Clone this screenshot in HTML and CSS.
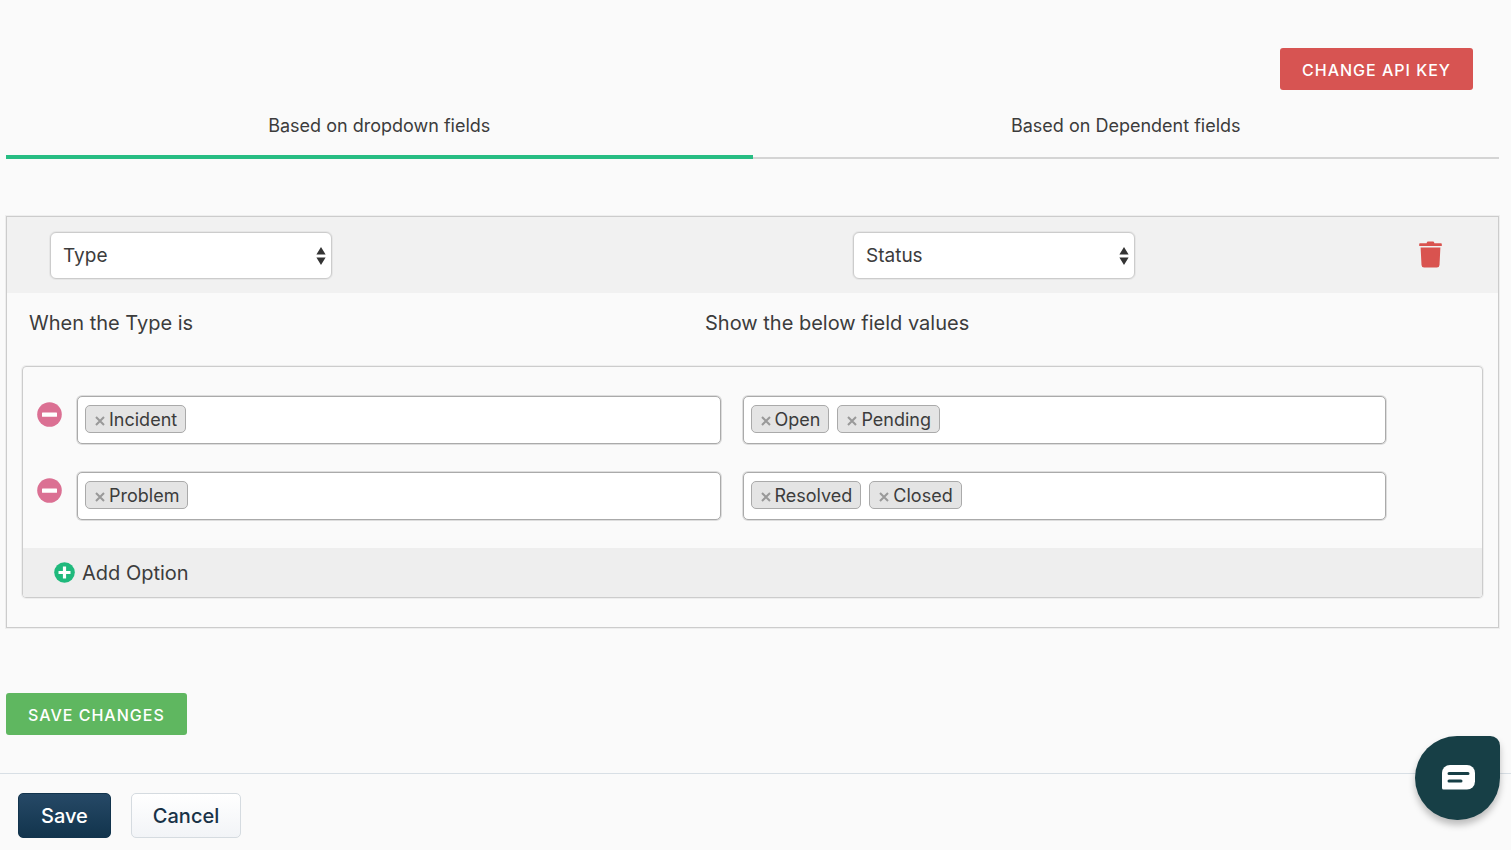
FILE: index.html
```html
<!DOCTYPE html>
<html lang="en">
<head>
<meta charset="utf-8">
<title>Field mapping settings</title>
<link rel="stylesheet" href="styles.css">
</head>
<body>
<svg class="sprite" aria-hidden="true">
  <symbol id="minus" viewBox="0 0 25 25"><circle cx="12.5" cy="12.5" r="12.3" fill="#db7093"/><rect x="5" y="10.4" width="15" height="4.4" rx=".6" fill="#fff"/></symbol>
  <symbol id="plus" viewBox="0 0 21 21"><circle cx="10.5" cy="10.5" r="10.3" fill="#1fb97c"/><path d="M8.900 4.500h3.200v4.400h4.400v3.200h-4.400v4.400H8.900v-4.400H4.500V8.900h4.400z" fill="#fff"/></symbol>
  <symbol id="arrows" viewBox="0 0 10 18"><path d="M5 0l4.6 7.5H.4zM5 18l4.6-7.5H.4z" fill="#333"/></symbol>
  <symbol id="cross" viewBox="0 0 10 10"><path d="M1 1l8 8M9 1L1 9" stroke="#999" stroke-width="2" fill="none"/></symbol>
</svg>
<main class="content">
  <div class="toolbar"><button class="btn btn-danger" type="button">CHANGE API KEY</button></div>
  <div class="tabs" role="tablist">
    <button class="tab tab-active" role="tab" aria-selected="true" type="button">Based on dropdown fields</button>
    <button class="tab" role="tab" aria-selected="false" type="button">Based on Dependent fields</button>
  </div>
  <section class="rule">
    <div class="rule-head">
      <div class="select-wrap"><select class="select" aria-label="Source field"><option>Type</option></select><svg class="select-arrows"><use href="#arrows"/></svg></div>
      <div class="select-wrap"><select class="select" aria-label="Target field"><option>Status</option></select><svg class="select-arrows"><use href="#arrows"/></svg></div>
      <button class="icon-btn trash-btn" type="button" aria-label="Delete rule">
        <svg class="trash" viewBox="0 0 23 27"><path d="M1 2.2h6.6C7.8.8 8.6.4 9.5.4h4c.9 0 1.700.4 1.900 1.800H22q.8 0 .8.8v1.900H.2V3q0-.8.8-.8zM1.600 6.500h19.800l-.9 17.500q-.2 2.500-2.600 2.500H5.100q-2.400 0-2.600-2.500z" fill="#d9534f"/></svg>
      </button>
    </div>
    <div class="rule-labels"><span>When the Type is</span><span>Show the below field values</span></div>
    <div class="options">
      <div class="option-list">
        <div class="option">
          <button class="icon-btn remove" type="button" aria-label="Remove option"><svg class="minus"><use href="#minus"/></svg></button>
          <div class="tags">
            <span class="tag"><button class="icon-btn" type="button" aria-label="Remove Incident"><svg class="cross"><use href="#cross"/></svg></button>Incident</span>
            <input class="tag-input" aria-label="Type values">
          </div>
          <div class="tags">
            <span class="tag"><button class="icon-btn" type="button" aria-label="Remove Open"><svg class="cross"><use href="#cross"/></svg></button>Open</span>
            <span class="tag"><button class="icon-btn" type="button" aria-label="Remove Pending"><svg class="cross"><use href="#cross"/></svg></button>Pending</span>
            <input class="tag-input" aria-label="Status values">
          </div>
        </div>
        <div class="option">
          <button class="icon-btn remove" type="button" aria-label="Remove option"><svg class="minus"><use href="#minus"/></svg></button>
          <div class="tags">
            <span class="tag"><button class="icon-btn" type="button" aria-label="Remove Problem"><svg class="cross"><use href="#cross"/></svg></button>Problem</span>
            <input class="tag-input" aria-label="Type values">
          </div>
          <div class="tags">
            <span class="tag"><button class="icon-btn" type="button" aria-label="Remove Resolved"><svg class="cross"><use href="#cross"/></svg></button>Resolved</span>
            <span class="tag"><button class="icon-btn" type="button" aria-label="Remove Closed"><svg class="cross"><use href="#cross"/></svg></button>Closed</span>
            <input class="tag-input" aria-label="Status values">
          </div>
        </div>
      </div>
      <div class="options-foot"><button class="add" type="button"><svg class="plus"><use href="#plus"/></svg>Add Option</button></div>
    </div>
  </section>
  <button class="btn btn-success" type="button">SAVE CHANGES</button>
</main>
<footer class="actions">
  <button class="action action-primary" type="button">Save</button>
  <button class="action" type="button">Cancel</button>
</footer>
<button class="chat" type="button" aria-label="Open chat">
  <svg class="chat-icon" viewBox="0 0 33 25"><path d="M8 0h17a8 8 0 0 1 8 8v8.500a8 8 0 0 1-8 8H1.500Q0 24.500 0 23V8a8 8 0 0 1 8-8z" fill="#fff"/><path d="M7 8.500h19M7 16h12" stroke="#173f46" stroke-width="3" stroke-linecap="round"/></svg>
</button>
</body>
</html>
```
FILE: styles.css
```css
* { box-sizing: border-box; }
body { margin: 0; background: #fafafa; color: #3c3c3c; font-family: Inter, "Liberation Sans", sans-serif; font-size: 18px; }
button, select, input { font: inherit; color: inherit; }
button { cursor: pointer; }
svg { display: block; }
.sprite { display: none; }
.content { padding: 48px 12px 38px 6px; }
.toolbar { display: flex; justify-content: flex-end; padding-right: 26px; }
.btn { height: 42px; padding: 2px 22px 0; border: 0; border-radius: 3px; color: #fff; font-size: 16px; font-weight: 500; letter-spacing: 1px; line-height: 24px; }
.btn-danger { background: #d75452; }
.btn-success { background: #5fb760; }
.tabs { display: grid; grid-template-columns: 1fr 1fr; margin-bottom: 57px; box-shadow: inset 0 -2px #d4d4d4; }
.tab { height: 69px; padding: 5px 0 0; border: 0; border-bottom: 4px solid transparent; background: none; }
.tab-active { border-color: #27bd83; }
.rule { border: 1px solid #ccc; padding-bottom: 29px; margin-bottom: 65px; box-shadow: 0 0 0 1px #eee; }
.rule-head { display: grid; grid-template-columns: 803fr 566fr 79fr; align-items: start; height: 76px; padding: 15px 0 0 43px; background: #f1f1f1; }
.select-wrap { position: relative; width: 282px; max-width: 100%; }
.select { width: 100%; height: 47px; padding: 0 12px; border: 1px solid #ccc; border-radius: 6px; appearance: none; background: #fff; font-size: 19px; box-shadow: 0 0 0 1px #e6e6e6; }
.select-arrows { position: absolute; top: 15px; right: 6px; width: 10px; height: 18px; pointer-events: none; }
.icon-btn { padding: 0; border: 0; background: none; }
.trash-btn { justify-self: start; padding-top: 9px; }
.trash { width: 23px; height: 27px; }
.rule-labels { display: grid; grid-template-columns: 676fr 793fr; height: 73px; padding: 15px 0 0 22px; font-size: 20px; line-height: 30px; }
.options { margin: 0 15px; border: 1px solid #ccc; border-radius: 4px; box-shadow: 0 0 0 1px #eee; }
.option-list { display: grid; gap: 28px; padding: 29px 96px 28px 14px; }
.option { display: grid; grid-template-columns: 40px minmax(0, 1fr) minmax(0, 1fr); align-items: start; }
.option .tags + .tags { margin-left: 11px; }
.option .tags:nth-child(2) { margin-right: 11px; }
.remove { padding-top: 6px; }
.minus { width: 25px; height: 25px; }
.tags { display: flex; gap: 8px; height: 48px; padding: 8px 7px; border: 1px solid #aaa; border-radius: 5px; background: #fff; box-shadow: 0 0 0 1px #ddd; }
.tag { display: flex; align-items: center; gap: 4px; height: 28px; padding: 0 8px 0 9px; border: 1px solid #aaa; border-radius: 5px; background: #e4e4e4; }
.cross { width: 10px; height: 10px; margin-top: 3px; }
.tag-input { flex: 1; min-width: 0; padding: 0; border: 0; outline: 0; background: none; }
.options-foot { padding: 10px 31px; background: #eee; border-radius: 0 0 3px 3px; }
.add { display: flex; align-items: center; gap: 7px; height: 29px; padding: 0; border: 0; background: none; font-size: 20px; line-height: 30px; }
.plus { width: 21px; height: 21px; }
.actions { display: flex; gap: 20px; padding: 19px 18px 12px; border-top: 1px solid #d8dfe5; }
.action { height: 45px; padding: 0 21px; border: 1px solid #d5dbe0; border-radius: 5px; background: linear-gradient(#fff, #f2f4f7); color: #183247; font-size: 20px; font-weight: 500; }
.action-primary { padding: 0 22px; border-color: #12344d; background: linear-gradient(#264966, #12344d); color: #fff; }
.chat { position: fixed; right: 11px; bottom: 30px; display: flex; justify-content: center; align-items: center; width: 85px; height: 84px; padding: 0 0 2px 2px; border: 0; border-radius: 43px 10px 43px 43px; background: #173f46; box-shadow: 0 5px 7px rgba(0, 0, 0, .25); }
.chat-icon { width: 33px; height: 25px; }
```
